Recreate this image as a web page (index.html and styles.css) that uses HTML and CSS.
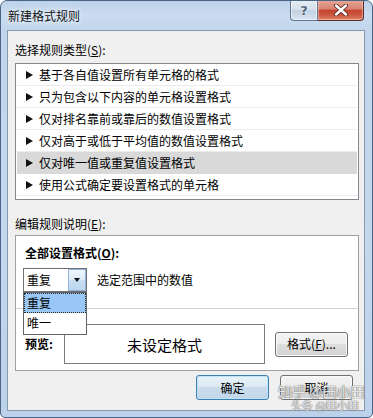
FILE: index.html
```html
<!DOCTYPE html>
<html lang="zh-CN">
<head>
<meta charset="utf-8">
<title>新建格式规则</title>
<link rel="stylesheet" href="styles.css">
</head>
<body>
<div class="window">
  <div class="titlebar">
    <span class="title">新建格式规则</span>
    <div class="caption">
      <div class="help">?</div>
      <div class="close">
        <svg width="16" height="12" viewBox="0 0 16 12">
          <path d="M3 1.5 L13 10.5 M13 1.5 L3 10.5" stroke="#5a2a24" stroke-width="4.2" stroke-linecap="round"/>
          <path d="M3 1.5 L13 10.5 M13 1.5 L3 10.5" stroke="#fff" stroke-width="2.4" stroke-linecap="round"/>
        </svg>
      </div>
    </div>
  </div>
  <div class="client">
    <div class="label lbl1">选择规则类型(<u>S</u>):</div>
    <div class="listbox">
      <div class="item"><span class="arrow"></span>基于各自值设置所有单元格的格式</div>
      <div class="item"><span class="arrow"></span>只为包含以下内容的单元格设置格式</div>
      <div class="item"><span class="arrow"></span>仅对排名靠前或靠后的数值设置格式</div>
      <div class="item"><span class="arrow"></span>仅对高于或低于平均值的数值设置格式</div>
      <div class="item selected"><span class="arrow"></span>仅对唯一值或重复值设置格式</div>
      <div class="item"><span class="arrow"></span>使用公式确定要设置格式的单元格</div>
    </div>
    <div class="label lbl2">编辑规则说明(<u>E</u>):</div>
    <div class="desc">
      <div class="bold heading">全部设置格式(<u>O</u>):</div>
      <div class="combo-row">
        <div class="combo">
          <span class="combo-text">重复</span>
          <span class="combo-btn"><span class="down"></span></span>
          <div class="dropdown">
            <div class="opt active">重复</div>
            <div class="opt">唯一</div>
          </div>
        </div>
        <span class="combo-after">选定范围中的数值</span>
      </div>
      <div class="sep"></div>
      <div class="preview-row">
        <span class="bold preview-label">预览:</span>
        <div class="preview">未设定格式</div>
        <div class="btn fmt">格式(<u>F</u>)...</div>
      </div>
    </div>
    <div class="buttons">
      <div class="btn ok">确定</div>
      <div class="btn">取消</div>
    </div>
  </div>
  <div class="watermark">
    <div class="wm1">知乎 @田小田</div>
    <div class="wm2">头条 @田小田</div>
  </div>
</div>
</body>
</html>
```
FILE: styles.css
```css
* { box-sizing: border-box; }
html, body { margin: 0; padding: 0; }
body {
  width: 373px;
  height: 418px;
  overflow: hidden;
  font-family: "Noto Sans CJK SC", "Noto Sans", sans-serif;
  font-size: 12px;
  color: #000;
  background: #fff;
}
u { text-decoration: underline; text-underline-offset: 1px; }

.window {
  width: 373px;
  height: 418px;
  border: 1px solid #4a6585;
  border-radius: 7px 7px 5px 5px;
  background: linear-gradient(180deg, #bdd2ea 0, #cadcf0 14px, #c1d6ec 30px, #c3d7ed 60%, #bcd2ea 100%);
  display: flex;
  flex-direction: column;
  position: relative;
  overflow: hidden;
}

.titlebar {
  height: 29px;
  display: flex;
  justify-content: space-between;
  align-items: flex-start;
  padding-left: 7px;
}
.title {
  margin-top: 7px;
  line-height: 16px;
  color: #111;
  text-shadow: 0 0 6px #eef4fb, 0 0 3px #eef4fb;
}
.caption {
  display: flex;
  margin-right: 8px;
  margin-top: -1px;
}
.help {
  width: 28px;
  height: 21px;
  border: 1px solid #5f7591;
  border-top: none;
  border-radius: 0 0 0 4px;
  background: linear-gradient(#e6edf5, #d5e0ec 48%, #c3d3e5 52%, #d6e3f0);
  box-shadow: inset 0 0 0 1px rgba(255,255,255,0.55);
  display: flex;
  align-items: center;
  justify-content: center;
  font-family: "DejaVu Sans", sans-serif;
  font-weight: bold;
  font-size: 13px;
  color: #56677d;
  text-shadow: 0 0 2px #fff;
  line-height: 1;
}
.close {
  width: 46px;
  height: 21px;
  border: 1px solid #5b2a26;
  border-top: none;
  border-left: none;
  border-radius: 0 0 4px 0;
  background: linear-gradient(#e8a898, #d9826f 45%, #c5432f 52%, #cf5c46 80%, #e0896d);
  box-shadow: inset 0 0 0 1px rgba(255,210,200,0.5);
  display: flex;
  align-items: center;
  justify-content: center;
}

.client {
  margin-left: 6px;
  width: 358px;
  height: 381px;
  background: #f0f0f0;
  border: 1px solid #8599b1;
  padding: 11px 11px 0 7px;
  display: flex;
  flex-direction: column;
}
.label { line-height: 16px; }
.lbl1 { margin-bottom: 5px; }
.lbl2 { margin-top: 16px; margin-bottom: 3px; }

.listbox {
  width: 344px;
  height: 137px;
  border: 1px solid #828790;
  background: #fff;
  padding: 0 1px;
}
.item {
  height: 22px;
  border-bottom: 1px solid #ebebeb;
  display: flex;
  align-items: center;
  padding-left: 9px;
  line-height: 16px;
}
.item.selected { background: #d9d9d9; border-bottom-color: #d9d9d9; }
.arrow {
  width: 0;
  height: 0;
  border-left: 7px solid #111;
  border-top: 4px solid transparent;
  border-bottom: 4px solid transparent;
  margin-right: 6px;
}

.desc {
  width: 344px;
  height: 136px;
  border: 1px solid #a0a0a0;
  background: #fff;
  padding: 9px 0 0 7px;
  display: flex;
  flex-direction: column;
}
.bold { font-weight: bold; }
.heading { line-height: 16px; margin-left: 2px; }
.combo-row {
  margin-top: 7px;
  display: flex;
  align-items: center;
}
.combo {
  position: relative;
  width: 64px;
  height: 24px;
  border: 1px solid #707070;
  background: #fff;
  display: flex;
  align-items: stretch;
  justify-content: space-between;
}
.combo-text { padding-left: 3px; line-height: 22px; }
.combo-btn {
  width: 18px;
  border: 1px solid #92b4dc;
  background: linear-gradient(#eef6fd, #dbeaf8 50%, #c8def3 50%, #bcd7f0);
  display: flex;
  align-items: center;
  justify-content: center;
}
.down {
  width: 0;
  height: 0;
  border-top: 4px solid #111;
  border-left: 3.5px solid transparent;
  border-right: 3.5px solid transparent;
}
.dropdown {
  position: absolute;
  top: 23px;
  left: -1px;
  width: 64px;
  height: 43px;
  border: 1px solid #646464;
  background: #fff;
  z-index: 2;
}
.opt {
  height: 20px;
  line-height: 18px;
  padding-left: 2px;
  border: 1px solid transparent;
}
.opt.active {
  background: #99c7f5;
  border: 1px dotted #2a2a2a;
}
.combo-after { margin-left: 10px; line-height: 16px; }
.sep {
  margin-top: 16px;
  margin-left: -7px;
  height: 1px;
  background: #d3d3d3;
}
.preview-row {
  margin-top: 15px;
  display: flex;
  align-items: center;
  padding-left: 2px;
}
.preview-label { width: 39px; line-height: 16px; }
.preview {
  width: 201px;
  height: 40px;
  border: 1px solid #7c7c7c;
  display: flex;
  align-items: center;
  justify-content: center;
  font-size: 15px;
}

.btn {
  width: 73px;
  height: 25px;
  border: 1px solid #707070;
  border-radius: 3px;
  background: linear-gradient(#f4f4f4, #ececec 50%, #dedede 50%, #d2d2d2);
  box-shadow: inset 0 0 0 1px #fafafa;
  display: flex;
  align-items: center;
  justify-content: center;
  line-height: 16px;
}
.fmt { margin-left: 10px; }
.buttons {
  margin-top: 4px;
  display: flex;
  justify-content: flex-end;
  gap: 11px;
}
.ok {
  border-color: #3c7fb1;
  background: linear-gradient(#e9f2f9, #dae8f3 50%, #c9dcec 50%, #c1d7ea);
  box-shadow: inset 0 0 0 1px #bfe4f7;
}

.watermark {
  position: absolute;
  left: 277px;
  top: 383px;
  color: rgba(255,255,255,0.85);
  text-shadow: 0 0 1px #555, 0 0 1px #777;
  pointer-events: none;
}
.wm1 { font-size: 14px; line-height: 15px; }
.wm2 { font-size: 11px; line-height: 12px; margin-left: 13px; }
```
